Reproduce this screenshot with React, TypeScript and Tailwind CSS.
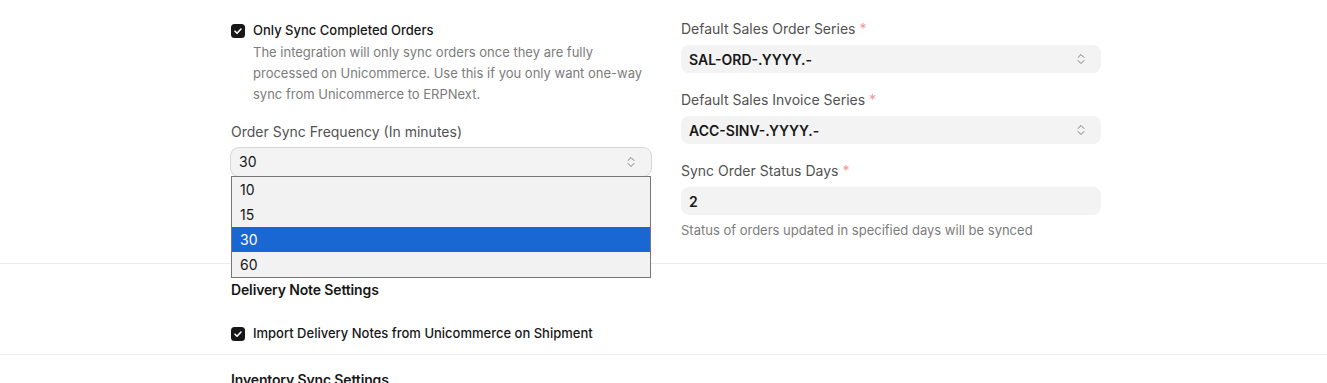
import React from 'react';

function Check() {
  return (
    <svg width="14" height="14" viewBox="0 0 14 14" className="shrink-0">
      <rect x="0" y="0" width="14" height="14" rx="3.5" fill="#171717" />
      <path d="M4 7.2l2 2 4-4.2" stroke="#fff" strokeWidth="1.6" fill="none" strokeLinecap="round" strokeLinejoin="round" />
    </svg>
  );
}

function UpDown() {
  return (
    <svg width="10" height="14" viewBox="0 0 10 14" className="shrink-0">
      <path d="M2 5.5l3-3 3 3M2 8.5l3 3 3-3" stroke="#7c7c7c" strokeWidth="1" fill="none" strokeLinecap="round" strokeLinejoin="round" />
    </svg>
  );
}

function Label({ text, required }: { text: string; required?: boolean }) {
  return (
    <div className="h-4 leading-4 text-[14px] text-[#525252] mb-2 whitespace-nowrap">
      {text}
      {required && <span className="text-[#f19a9a] ml-1">*</span>}
    </div>
  );
}

function SelectBox({ value }: { value: string }) {
  return (
    <div className="h-7 rounded-lg bg-[#f3f3f3] flex items-center justify-between pl-2 pr-[15px]">
      <span className="text-[14px] font-semibold text-[#171717]">{value}</span>
      <UpDown />
    </div>
  );
}

export default function App() {
  const options = ['10', '15', '30', '60'];
  return (
    <div className="font-['Inter',sans-serif] bg-white w-[1327px] h-[383px] overflow-hidden">
      <section className="pl-[231px] pt-[22px] pb-[25px] border-b border-[#ededed]">
        <div className="grid grid-cols-[420px_420px] gap-x-[30px]">
          <div>
            <div className="flex items-center gap-2 h-4 mt-px">
              <Check />
              <span className="text-[13px] font-medium text-[#171717]">Only Sync Completed Orders</span>
            </div>
            <p className="pl-[22px] mt-[2.5px] text-[13px] leading-[21px] text-[#7c7c7c] whitespace-nowrap">
              The integration will only sync orders once they are fully
              <br />
              processed on Unicommerce. Use this if you only want one-way
              <br />
              sync from Unicommerce to ERPNext.
            </p>
            <div className="mt-[19px]">
              <Label text="Order Sync Frequency (In minutes)" />
              <div className="relative">
                <div className="h-7 rounded-lg bg-[#f3f3f3] flex items-center justify-between pl-2 pr-[15px] ring-1 ring-[#d6d6d6]">
                  <span className="text-[14px] text-[#171717]">30</span>
                  <UpDown />
                </div>
                <div className="absolute left-0 top-[28px] w-[420px] z-10 border border-[#767676] bg-[#f2f2f2]">
                  {options.map((o) => (
                    <div
                      key={o}
                      className={`h-[25px] leading-[25px] pl-2 text-[14px] ${o === '30' ? 'bg-[#1967d2] text-white' : 'text-[#171717]'}`}
                    >
                      {o}
                    </div>
                  ))}
                </div>
              </div>
            </div>
          </div>
          <div className="flex flex-col gap-[19px] -mt-px">
            <div>
              <Label text="Default Sales Order Series" required />
              <SelectBox value="SAL-ORD-.YYYY.-" />
            </div>
            <div>
              <Label text="Default Sales Invoice Series" required />
              <SelectBox value="ACC-SINV-.YYYY.-" />
            </div>
            <div>
              <Label text="Sync Order Status Days" required />
              <div className="h-7 rounded-lg bg-[#f3f3f3] flex items-center pl-2">
                <span className="text-[14px] font-semibold text-[#171717]">2</span>
              </div>
              <div className="mt-[7px] text-[13px] leading-4 text-[#7c7c7c]">
                Status of orders updated in specified days will be synced
              </div>
            </div>
          </div>
        </div>
      </section>
      <section className="pl-[231px] pt-[16px] pb-[12px] border-b border-[#ededed]">
        <h3 className="text-[14px] leading-5 font-semibold tracking-[-0.01em] text-[#171717]">Delivery Note Settings</h3>
        <div className="flex items-center gap-2 h-4 mt-[26px]">
          <Check />
          <span className="text-[13px] font-medium text-[#171717]">Import Delivery Notes from Unicommerce on Shipment</span>
        </div>
      </section>
      <section className="pl-[231px] pt-[15px]">
        <h3 className="text-[14px] leading-5 font-semibold tracking-[-0.01em] text-[#171717]">Inventory Sync Settings</h3>
      </section>
    </div>
  );
}
